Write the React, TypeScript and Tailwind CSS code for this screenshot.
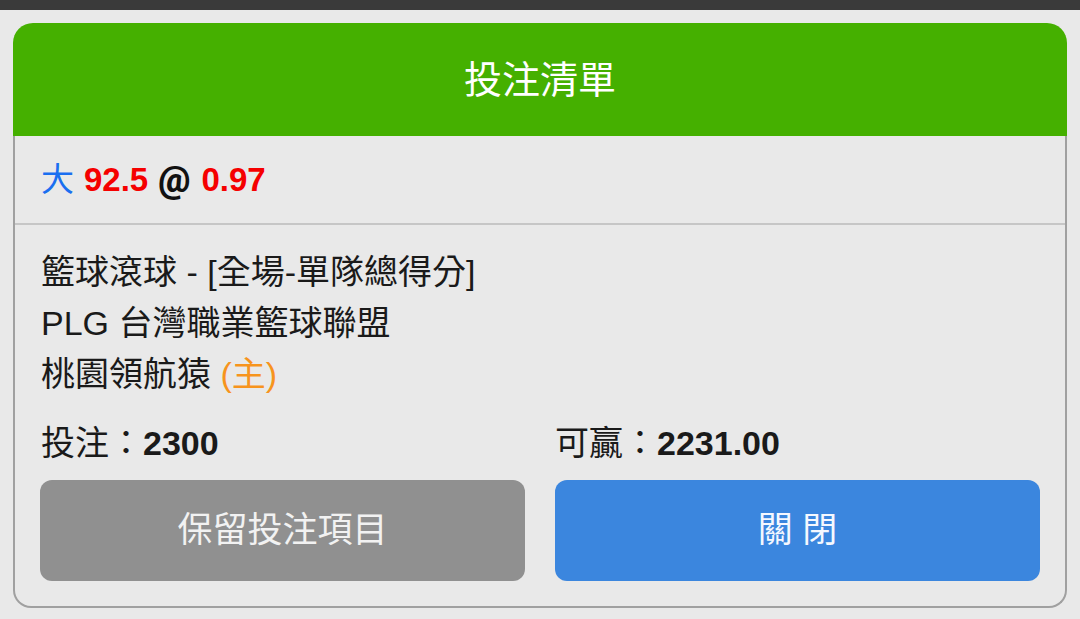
export default function App() {
  const font = { fontFamily: '"Liberation Sans", "Noto Sans CJK TC", sans-serif' };
  return (
    <div className="w-[1080px] h-[619px] bg-[#e9e9e9] overflow-hidden" style={font}>
      <div className="h-[10px] bg-[#3a3a3a]" />
      <div className="px-[13px] pt-[13px]">
        <div className="h-[113px] bg-[#45b000] rounded-t-[20px] flex items-center justify-center">
          <span className="text-white text-[38px] leading-none">投注清單</span>
        </div>
        <div className="border-x-2 border-b-2 border-[#a0a0a0] rounded-b-[18px] bg-[#e9e9e9]">
          <div className="h-[89px] border-b-2 border-[#c6c6c6] flex items-center px-[26px] text-[33px] font-bold leading-none">
            <span className="text-[#1a6ff0] font-normal">大</span>
            <span className="text-[#f50000] ml-[10px]">92.5</span>
            <span className="text-[#111] ml-[10px] font-[Roboto,sans-serif] font-black text-[36px]">@</span>
            <span className="text-[#f50000] ml-[11px]">0.97</span>
          </div>
          <div className="pt-[22px] px-[26px] text-[34px] leading-[51px] text-[#1a1a1a]">
            <div>籃球滾球 - [全場-單隊總得分]</div>
            <div>PLG 台灣職業籃球聯盟</div>
            <div>
              桃園領航猿 <span className="text-[#f7941d]">(主)</span>
            </div>
          </div>
          <div className="grid grid-cols-2 gap-x-[30px] px-[25px] mt-[18px] pb-[25px]">
            <div className="text-[34px] leading-[51px] text-[#1a1a1a] pl-[1px]">
              投注：<span className="font-bold">2300</span>
            </div>
            <div className="text-[34px] leading-[51px] text-[#1a1a1a]">
              可贏：<span className="font-bold">2231.00</span>
            </div>
            <div className="mt-[11px] h-[101px] rounded-[12px] bg-[#909090] flex items-center justify-center text-[#f2f2f2] text-[35px]">
              保留投注項目
            </div>
            <div className="mt-[11px] h-[101px] rounded-[12px] bg-[#3b86de] flex items-center justify-center text-[#f5f8ff] text-[35px]">
              關 閉
            </div>
          </div>
        </div>
      </div>
    </div>
  );
}
